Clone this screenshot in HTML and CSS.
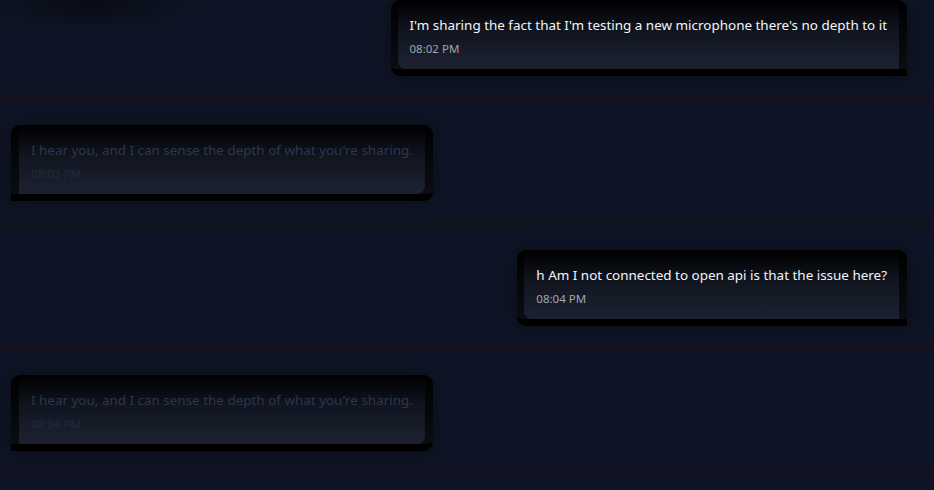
FILE: index.html
```html
<!DOCTYPE html>
<html lang="en">
<head>
<meta charset="utf-8">
<title>Chat</title>
<link rel="stylesheet" href="styles.css">
</head>
<body>
<main class="chat">
  <div class="row row-user">
    <div class="bubble bubble-user">
      <div class="bubble-inner">
        <p class="text">I'm sharing the fact that I'm testing a new microphone there's no depth to it</p>
        <span class="time">08:02 PM</span>
      </div>
    </div>
  </div>
  <div class="row row-bot">
    <div class="bubble bubble-bot">
      <div class="bubble-inner">
        <p class="text">I hear you, and I can sense the depth of what you're sharing.</p>
        <span class="time">08:03 PM</span>
      </div>
    </div>
  </div>
  <div class="row row-user">
    <div class="bubble bubble-user">
      <div class="bubble-inner">
        <p class="text">h Am I not connected to open api is that the issue here?</p>
        <span class="time">08:04 PM</span>
      </div>
    </div>
  </div>
  <div class="row row-bot">
    <div class="bubble bubble-bot">
      <div class="bubble-inner">
        <p class="text">I hear you, and I can sense the depth of what you're sharing.</p>
        <span class="time">08:04 PM</span>
      </div>
    </div>
  </div>
</main>
</body>
</html>
```

FILE: styles.css
```css
html, body {
  margin: 0;
  padding: 0;
}

body {
  width: 934px;
  height: 490px;
  overflow: hidden;
  background:
    radial-gradient(ellipse 120px 30px at 90px 4px, rgba(5, 8, 14, 0.7), rgba(5, 8, 14, 0) 100%),
    #0f1526;
  font-family: "Noto Sans", "Open Sans", sans-serif;
}

.chat {
  display: flex;
  flex-direction: column;
  margin-top: -23px;
}

.row {
  display: flex;
  padding: 23px 27px 18px 11px;
  border-bottom: 8px solid #13131f;
}

.row-user {
  justify-content: flex-end;
}

.row-bot {
  justify-content: flex-start;
}

.bubble {
  padding: 0 8px 0 8px;
  border-bottom: 7px solid #000;
  background: linear-gradient(180deg, #000 0%, #0b0d12 100%);
  box-shadow: 0 0 18px 4px rgba(0, 0, 0, 0.28);
}

.bubble-user {
  border-radius: 9px 9px 0 9px;
  padding-left: 7px;
}

.bubble-bot {
  border-radius: 9px 9px 9px 0;
}

.bubble-inner {
  padding: 14px 12px 11px 12px;
  background: linear-gradient(180deg, #000 0%, #111520 45%, #1d2232 100%);
}

.bubble-user .bubble-inner {
  border-radius: 8px 8px 0 8px;
}

.bubble-bot .bubble-inner {
  border-radius: 8px 8px 8px 0;
}

.text {
  margin: 0;
  font-size: 13.45px;
  line-height: 22px;
  white-space: nowrap;
}

.time {
  display: block;
  margin-top: 4px;
  font-size: 11.5px;
  line-height: 18px;
}

.bubble-user .text {
  color: #f4f5f7;
}

.bubble-user .time {
  color: #a2a6ae;
}

.bubble-bot .text {
  color: #2c374d;
}

.bubble-bot .time {
  color: #232a39;
}
```
